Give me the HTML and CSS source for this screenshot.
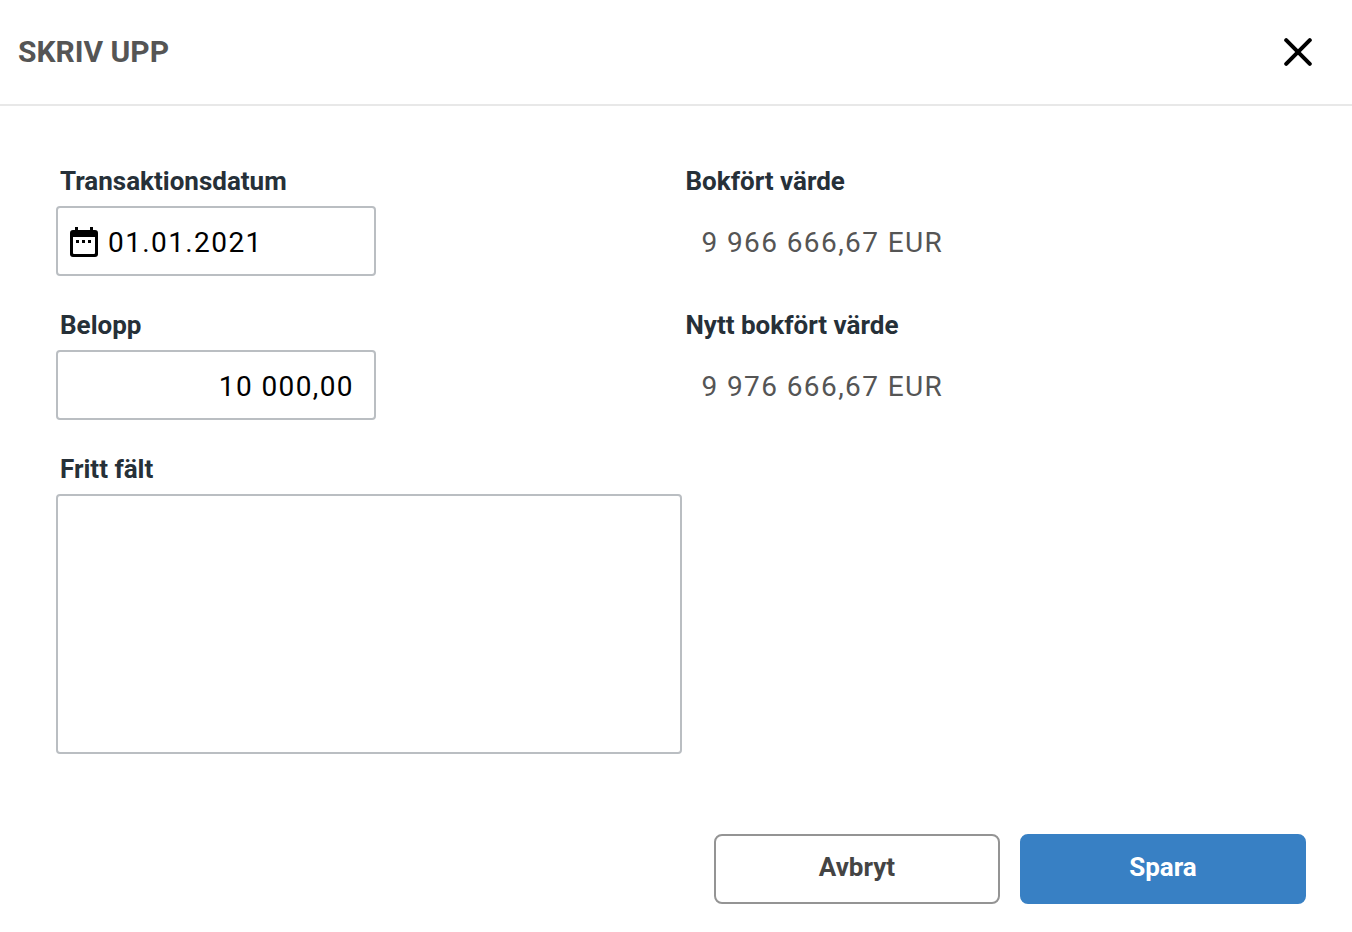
FILE: index.html
```html
<!DOCTYPE html>
<html lang="sv">
<head>
<meta charset="utf-8">
<meta name="viewport" content="width=device-width, initial-scale=1">
<title>Skriv upp</title>
<link rel="stylesheet" href="styles.css">
</head>
<body>
<form class="dialog">
  <header class="dialog-header">
    <h1 class="title">SKRIV UPP</h1>
    <button class="close" type="button" aria-label="Stäng">
      <svg viewBox="0 0 28 28" width="28" height="28" aria-hidden="true"><path d="M2.2 2.2 25.8 25.8M25.8 2.2 2.2 25.8" fill="none" stroke="#000" stroke-width="4" stroke-linecap="round"/></svg>
    </button>
  </header>
  <main class="content">
    <div class="field">
      <label class="label" for="date">Transaktionsdatum</label>
      <div class="box">
        <svg class="calendar" viewBox="0 0 28 32" width="28" height="32" aria-hidden="true">
          <path fill="#000" fill-rule="evenodd" d="M5 2h3v3h12V2h3v3h2q3 0 3 3v21q0 3-3 3H3q-3 0-3-3V8q0-3 3-3h2zM3 12v16q0 1 1 1h20q1 0 1-1V12z"/>
          <path fill="#000" d="M6 15h3v3H6zM12 15h3v3h-3zM18 15h3v3h-3z"/>
        </svg>
        <input class="input" id="date" type="text" value="01.01.2021">
      </div>
    </div>
    <div class="field">
      <span class="label">Bokfört värde</span>
      <output class="value">9 966 666,67 EUR</output>
    </div>
    <div class="field">
      <label class="label" for="amount">Belopp</label>
      <div class="box">
        <input class="input amount" id="amount" type="text" value="10 000,00">
      </div>
    </div>
    <div class="field">
      <span class="label">Nytt bokfört värde</span>
      <output class="value">9 976 666,67 EUR</output>
    </div>
    <div class="field">
      <label class="label" for="note">Fritt fält</label>
      <textarea class="note" id="note"></textarea>
    </div>
  </main>
  <footer class="actions">
    <button class="button" type="button">Avbryt</button>
    <button class="button primary" type="submit">Spara</button>
  </footer>
</form>
</body>
</html>
```
FILE: styles.css
```css
* {
  box-sizing: border-box;
}

body {
  margin: 0;
  background: #fff;
  font-family: Roboto, sans-serif;
  color: #263038;
}

.dialog-header {
  display: flex;
  align-items: center;
  justify-content: space-between;
  padding: 32px 40px 32px 18px;
  border-bottom: 2px solid #e8e8e8;
}

.title {
  margin: 0;
  font-size: 30px;
  line-height: 40px;
  font-weight: 700;
  color: #555;
}

.close {
  display: flex;
  padding: 0;
  border: 0;
  background: none;
}

.content {
  display: grid;
  grid-template-columns: 1fr 1fr;
  row-gap: 32px;
  padding: 58px 45px 0 56px;
}

.field {
  display: flex;
  flex-direction: column;
}

.label {
  padding: 0 4px;
  margin-bottom: 8px;
  font-size: 26px;
  line-height: 34px;
  font-weight: 700;
}

.box {
  display: flex;
  align-items: center;
  gap: 10px;
  width: 320px;
  height: 70px;
  padding: 0 12px;
  border: 2px solid #babec2;
  border-radius: 4px;
}

.calendar {
  flex: none;
}

.input {
  flex: 1;
  min-width: 0;
  padding: 4px 0 0;
  border: 0;
  outline: 0;
  background: none;
  font-family: inherit;
  font-size: 28px;
  line-height: 40px;
  letter-spacing: 0.05em;
  color: #000;
}

.amount {
  padding-right: 8px;
  text-align: right;
}

.value {
  padding: 4px 20px 0;
  font-size: 28px;
  line-height: 66px;
  letter-spacing: 0.05em;
  color: #555;
}

.note {
  width: 100%;
  height: 260px;
  border: 2px solid #babec2;
  border-radius: 4px;
  resize: none;
}

.actions {
  display: flex;
  justify-content: flex-end;
  gap: 20px;
  padding: 80px 46px 28px;
}

.button {
  width: 286px;
  height: 70px;
  padding: 0 0 4px;
  border: 2px solid #949494;
  border-radius: 8px;
  background: #fff;
  font-family: inherit;
  font-size: 26px;
  font-weight: 700;
  color: #444;
}

.primary {
  border-color: #3880c4;
  background: #3880c4;
  color: #fff;
}
```
